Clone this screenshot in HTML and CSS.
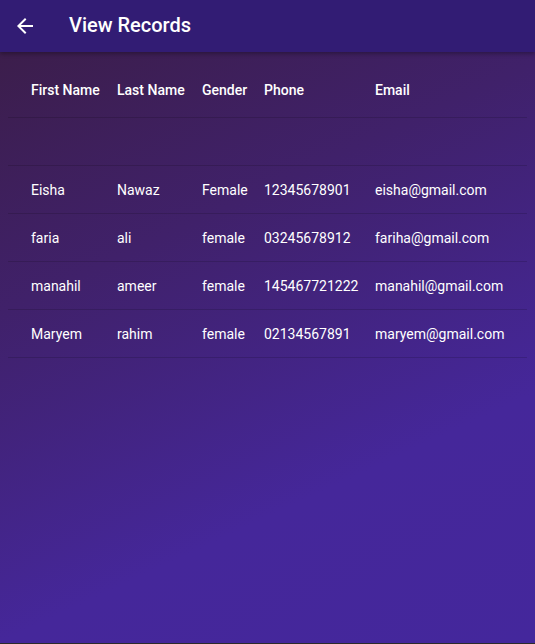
FILE: index.html
```html
<!DOCTYPE html>
<html>
<head>
<meta charset="utf-8">
<link rel="stylesheet" href="styles.css">
</head>
<body>
<div class="screen">
  <header class="appbar">
    <svg class="back" width="24" height="24" viewBox="0 0 24 24"><path d="M20 11H7.83l5.59-5.59L12 4l-8 8 8 8 1.41-1.41L7.83 13H20v-2z" fill="#fff"/></svg>
    <h1 class="title">View Records</h1>
  </header>
  <main class="content">
    <div class="table">
      <div class="row head">
        <span>First Name</span><span>Last Name</span><span>Gender</span><span>Phone</span><span>Email</span>
      </div>
      <div class="row"></div>
      <div class="row">
        <span>Eisha</span><span>Nawaz</span><span>Female</span><span>12345678901</span><span>eisha@gmail.com</span>
      </div>
      <div class="row">
        <span>faria</span><span>ali</span><span>female</span><span>03245678912</span><span>fariha@gmail.com</span>
      </div>
      <div class="row">
        <span>manahil</span><span>ameer</span><span>female</span><span>145467721222</span><span>manahil@gmail.com</span>
      </div>
      <div class="row">
        <span>Maryem</span><span>rahim</span><span>female</span><span>02134567891</span><span>maryem@gmail.com</span>
      </div>
    </div>
  </main>
</div>
</body>
</html>
```
FILE: styles.css
```css
html, body {
  margin: 0;
  padding: 0;
  height: 100%;
}
body {
  font-family: Roboto, "Noto Sans", sans-serif;
  background: #2b2b2b;
}
.screen {
  height: 643px;
  display: flex;
  flex-direction: column;
  background: linear-gradient(155deg, #3b1d45 0%, #40216a 35%, #45279a 72%, #44279c 100%);
  color: #fff;
  overflow: hidden;
}
.appbar {
  height: 52px;
  flex: none;
  display: flex;
  align-items: center;
  background: #321c74;
  box-shadow: 0 2px 4px rgba(0,0,0,0.3);
  position: relative;
  z-index: 1;
}
.back {
  margin-left: 13px;
  margin-right: 32px;
}
.title {
  margin: 0;
  font-size: 20px;
  font-weight: 500;
  line-height: 1;
  padding-bottom: 2px;
}
.content {
  padding: 10px 8px 0 8px;
}
.table {
  display: flex;
  flex-direction: column;
}
.row {
  display: grid;
  grid-template-columns: 86px 85px 62px 111px 1fr;
  align-items: center;
  padding-left: 23px;
  height: 47px;
  border-bottom: 1px solid rgba(0,0,0,0.14);
  font-size: 14px;
}
.row.head {
  height: 55px;
  font-weight: 500;
}
.row span {
  white-space: nowrap;
}
```
